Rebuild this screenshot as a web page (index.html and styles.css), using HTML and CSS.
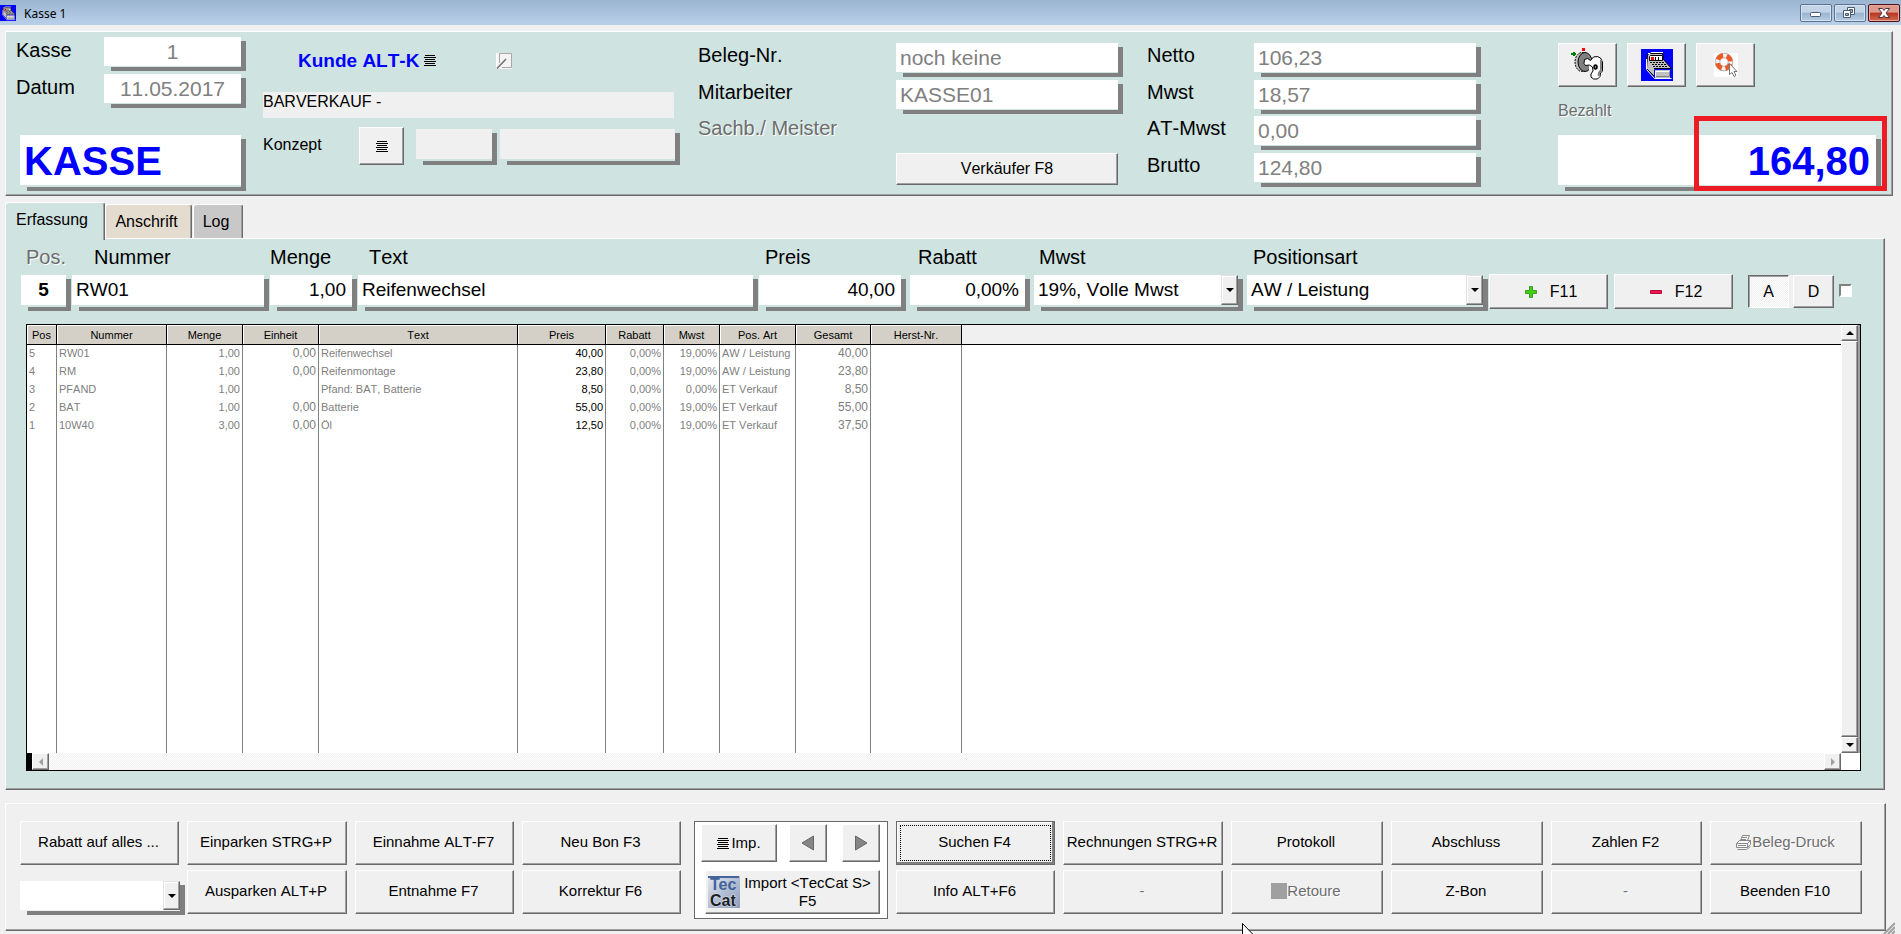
FILE: index.html
```html
<!DOCTYPE html>
<html lang="de">
<head>
<meta charset="utf-8">
<meta name="viewport" content="width=device-width, initial-scale=1">
<title>Kasse 1</title>
<link rel="stylesheet" href="styles.css">
</head>
<body>
<svg class="defs" width="0" height="0" aria-hidden="true">
  <symbol id="lines" viewBox="0 0 12 11">
    <path d="M1 .5h10M0 2.5h12M1 4.5h10M0 6.5h12M1 8.5h10M0 10.5h12" stroke="#000" fill="none" shape-rendering="crispEdges"/>
  </symbol>
  <symbol id="register" viewBox="0 0 32 32">
    <path fill="#00f" d="M0 0h32v32H0z"/>
    <path fill="#c0c0c0" stroke="#000" d="M6.500 5.500l2-1h13l1 6 7 8v10h-15l-9-9z"/>
    <path fill="none" stroke="#fff" d="M7 4.500h2l1-1h12M5.500 20v-10"/>
    <path fill="#fff" stroke="#000" d="M8.500 7.500l1-1h12v5h-13z"/>
    <path fill="red" d="M10 8h3v3h-3z"/>
    <path fill="none" stroke="#000" d="M14.500 8v3M17.500 8v3"/>
    <path fill="none" stroke="#000" stroke-dasharray="2 1" d="M9 13.500h15M11 15.500h15M12 17.500h15"/>
    <path fill="none" stroke="#000" d="M13 19.500h17"/>
    <path fill="#c0c0c0" stroke="#00f" d="M13.500 20.500h16v9h-16z"/>
    <path fill="none" stroke="#fff" d="M14.500 28v-5.500h14M5.500 20.500l8 9h17"/>
    <path fill="none" stroke="#808080" d="M15 27.500h13.500v-5"/>
  </symbol>
</svg>

<header class="titlebar">
  <svg class="app-icon" width="16" height="16"><use href="#register"/></svg>
  <h1 class="title">Kasse 1</h1>
  <div class="window-buttons">
    <button class="win" type="button" aria-label="Minimieren">
      <svg width="30" height="16"><rect x="9.500" y="7.500" width="10" height="4" rx="1" fill="#fff" stroke="#4a5a6e"/></svg>
    </button>
    <button class="win" type="button" aria-label="Wiederherstellen">
      <svg width="30" height="16"><path fill="#fff" stroke="#4a5a6e" d="M12.500 2.500h7v7h-7z"/><path fill="#9bb5d0" stroke="#4a5a6e" d="M14.500 4.500h3v3h-3z"/><path fill="#fff" stroke="#4a5a6e" d="M8.500 5.500h7v7h-7z"/><path fill="#9bb5d0" stroke="#4a5a6e" d="M10.500 8.500h3v2h-3z"/></svg>
    </button>
    <button class="win close" type="button" aria-label="Schließen">
      <svg width="30" height="16"><path fill="#fff" stroke="#4b3440" d="M9.500 3.500h4l1.500 2 1.500-2h4l-3.500 4.500 3.500 4.500h-4l-1.500-2-1.500 2h-4l3.500-4.500z"/></svg>
    </button>
  </div>
</header>

<main class="window">
  <section class="panel head">
    <div class="block register">
      <div class="pairs">
        <label for="kasse">Kasse</label>
        <div class="field"><input class="center" id="kasse" value="1" readonly></div>
        <label for="datum">Datum</label>
        <div class="field"><input class="center" id="datum" value="11.05.2017" readonly></div>
      </div>
      <div class="field display left"><input value="KASSE" aria-label="Modus" readonly></div>
    </div>

    <div class="block customer">
      <div class="customer-line">
        <button class="plain" type="button">Kunde ALT-K <svg width="12" height="11"><use href="#lines"/></svg></button>
        <button class="plain" type="button" aria-label="Notiz">
          <svg width="16" height="16"><path fill="#f4f4f4" d="M0 0h16v16H0z"/><path fill="none" stroke="#a8a8a8" d="M3.500 10V.5h12v14H6"/><path fill="none" stroke="#fff" d="M.5 0v14"/><path stroke="#707070" stroke-width="1.500" d="M1 15.500L10 6"/></svg>
        </button>
      </div>
      <output class="customer-name">BARVERKAUF -</output>
      <div class="concept">
        <label for="konzept">Konzept</label>
        <button class="btn concept-btn" type="button" aria-label="Konzept wählen"><svg width="12" height="11"><use href="#lines"/></svg></button>
        <div class="field gap2 muted short"><input id="konzept" readonly></div>
        <div class="field gap2 muted long"><input aria-label="Konzepttext" readonly></div>
      </div>
    </div>

    <div class="block pairs receipt">
      <label for="beleg">Beleg-Nr.</label>
      <div class="field"><input id="beleg" value="noch keine" readonly></div>
      <label for="mitarbeiter">Mitarbeiter</label>
      <div class="field"><input id="mitarbeiter" value="KASSE01" readonly></div>
      <span class="disabled-text">Sachb./ Meister</span>
      <button class="btn seller" type="button">Verkäufer F8</button>
    </div>

    <div class="block pairs totals">
      <label for="netto">Netto</label>
      <div class="field"><input id="netto" value="106,23" readonly></div>
      <label for="mwst">Mwst</label>
      <div class="field"><input id="mwst" value="18,57" readonly></div>
      <label for="atmwst">AT-Mwst</label>
      <div class="field"><input id="atmwst" value="0,00" readonly></div>
      <label for="brutto">Brutto</label>
      <div class="field"><input id="brutto" value="124,80" readonly></div>
    </div>

    <div class="block payment">
      <div class="tools">
        <button class="btn" type="button" aria-label="Schlüssel">
          <svg width="34" height="34" viewBox="0 0 34 34">
            <path fill="green" d="M2 4h2v1h1v2H4v1H2V7H0V5h2z"/><path fill="red" d="M11 0h3v3h-3z"/>
            <ellipse cx="11" cy="14" rx="7" ry="9.500" fill="#c0c0c0" stroke="#000" stroke-dasharray="2 1"/>
            <ellipse cx="14" cy="14" rx="7" ry="9.500" fill="#808080" stroke="#000"/>
            <path fill="#fff" d="M18 12h6v10h-6z"/>
            <path fill="#fff" stroke="#000" d="M13.500 11.500l3-1 3 2 3-3.500 4-.5 3 1.500 2 4v9l-2 2-.5 3.500-2.500 2.500h-4l-2.500-2v-3l2-3-.5-4-3-2-4 .5-1.500-2z"/>
            <path stroke="#808080" stroke-width="2" fill="none" d="M30 12v10l-2 3-.5 3"/>
            <ellipse cx="24.500" cy="19" rx="1.500" ry="2" fill="#808080" stroke="#000" stroke-width="1.500"/>
          </svg>
        </button>
        <button class="btn" type="button" aria-label="Kassenlade"><svg width="32" height="32"><use href="#register"/></svg></button>
        <button class="btn" type="button" aria-label="Hilfe">
          <svg width="24" height="24" viewBox="0 0 24 24">
            <path fill="#fff" d="M0 0h24v24H0z"/>
            <circle cx="10" cy="9" r="6.500" fill="none" stroke="#a8a0a0" stroke-width="5.500"/>
            <circle cx="10" cy="9" r="6.500" fill="none" stroke="#f4f4f4" stroke-width="4"/>
            <circle cx="10" cy="9" r="6.500" fill="none" stroke="#ee5a24" stroke-width="4.500" stroke-dasharray="6.500 3.710" stroke-dashoffset="-2"/>
            <path fill="#fff" stroke="#777" d="M15.500 10.500v11l2.500-2 2 4 2-1-2-4h3z"/>
          </svg>
        </button>
      </div>
      <label class="disabled-text small" for="bezahlt">Bezahlt</label>
      <div class="field display right"><input id="bezahlt" value="164,80" readonly><i class="marker"></i></div>
    </div>
  </section>

  <nav class="tabs">
    <button class="tab active" type="button">Erfassung</button>
    <button class="tab sand" type="button">Anschrift</button>
    <button class="tab grey" type="button">Log</button>
  </nav>

  <section class="panel entry">
    <form class="entry-row">
      <div class="cell"><label class="disabled-text" for="f-pos">Pos.</label><div class="field gap2"><input class="center bold" id="f-pos" value="5"></div></div>
      <div class="cell in1"><label for="f-nr">Nummer</label><div class="field gap2"><input id="f-nr" value="RW01"></div></div>
      <div class="cell in0"><label for="f-menge">Menge</label><div class="field gap2"><input class="num" id="f-menge" value="1,00"></div></div>
      <div class="cell in2"><label for="f-text">Text</label><div class="field gap2"><input id="f-text" value="Reifenwechsel"></div></div>
      <div class="cell in3 roomy"><label for="f-preis">Preis</label><div class="field gap2"><input class="num" id="f-preis" value="40,00"></div></div>
      <div class="cell in4 roomy"><label for="f-rabatt">Rabatt</label><div class="field gap2"><input class="num" id="f-rabatt" value="0,00%"></div></div>
      <div class="cell roomy"><label for="f-mwst">Mwst</label><div class="field gap2"><select id="f-mwst"><option>19%, Volle Mwst</option></select><span class="arrow"></span></div></div>
      <div class="cell in3"><label for="f-art">Positionsart</label><div class="field gap2"><select id="f-art"><option>AW / Leistung</option></select><span class="arrow"></span></div></div>
      <button class="btn key" type="button"><svg width="14" height="14"><path fill="#3fd40a" stroke="#3f9a2a" d="M5.500 1.500h3v4h4v3h-4v4h-3v-4h-4v-3h4z"/></svg>F11</button>
      <button class="btn key wide" type="button"><svg width="14" height="14"><path fill="#f5134f" stroke="#b01040" d="M1.500 5.500h11v3h-11z"/></svg>F12</button>
      <div class="toggle">
        <button class="btn pressed" type="button">A</button>
        <button class="btn" type="button">D</button>
      </div>
      <input class="check" type="checkbox" aria-label="Option">
    </form>

    <div class="grid-view">
      <table class="items">
        <colgroup>
          <col class="c-pos"><col class="c-nr"><col class="c-qty"><col class="c-qty"><col class="c-text"><col class="c-price"><col class="c-disc"><col class="c-vat"><col class="c-qty"><col class="c-sum"><col class="c-mfr"><col>
        </colgroup>
        <thead>
          <tr><th>Pos</th><th>Nummer</th><th>Menge</th><th>Einheit</th><th>Text</th><th>Preis</th><th>Rabatt</th><th>Mwst</th><th>Pos. Art</th><th>Gesamt</th><th>Herst-Nr.</th><td></td></tr>
        </thead>
        <tbody>
          <tr><td>5</td><td>RW01</td><td class="n">1,00</td><td class="n big">0,00</td><td>Reifenwechsel</td><td class="n dark">40,00</td><td class="n">0,00%</td><td class="n">19,00%</td><td>AW / Leistung</td><td class="n big">40,00</td><td></td><td></td></tr>
          <tr><td>4</td><td>RM</td><td class="n">1,00</td><td class="n big">0,00</td><td>Reifenmontage</td><td class="n dark">23,80</td><td class="n">0,00%</td><td class="n">19,00%</td><td>AW / Leistung</td><td class="n big">23,80</td><td></td><td></td></tr>
          <tr><td>3</td><td>PFAND</td><td class="n">1,00</td><td></td><td>Pfand: BAT, Batterie</td><td class="n dark">8,50</td><td class="n">0,00%</td><td class="n">0,00%</td><td>ET Verkauf</td><td class="n big">8,50</td><td></td><td></td></tr>
          <tr><td>2</td><td>BAT</td><td class="n">1,00</td><td class="n big">0,00</td><td>Batterie</td><td class="n dark">55,00</td><td class="n">0,00%</td><td class="n">19,00%</td><td>ET Verkauf</td><td class="n big">55,00</td><td></td><td></td></tr>
          <tr><td>1</td><td>10W40</td><td class="n">3,00</td><td class="n big">0,00</td><td>Öl</td><td class="n dark">12,50</td><td class="n">0,00%</td><td class="n">19,00%</td><td>ET Verkauf</td><td class="n big">37,50</td><td></td><td></td></tr>
          <tr class="rest"><td></td><td></td><td></td><td></td><td></td><td></td><td></td><td></td><td></td><td></td><td></td><td></td></tr>
        </tbody>
      </table>
      <div class="vscroll">
        <button class="btn scroll up" type="button" aria-label="Nach oben"></button>
        <div class="btn thumb"></div>
        <button class="btn scroll down" type="button" aria-label="Nach unten"></button>
      </div>
      <div class="hscroll">
        <button class="btn scroll prev" type="button" aria-label="Nach links" disabled></button>
        <button class="btn scroll next" type="button" aria-label="Nach rechts" disabled></button>
      </div>
    </div>
  </section>

  <section class="panel actions">
    <button class="btn" type="button">Rabatt auf alles ...</button>
    <button class="btn" type="button">Einparken STRG+P</button>
    <button class="btn" type="button">Einnahme ALT-F7</button>
    <button class="btn" type="button">Neu Bon F3</button>
    <div class="import">
      <div class="import-top">
        <button class="btn imp" type="button"><svg width="12" height="11"><use href="#lines"/></svg>Imp.</button>
        <button class="btn step" type="button" aria-label="Zurück"><svg width="14" height="16"><path fill="#858585" stroke="#666" d="M12.500 1v14L1 8z"/></svg></button>
        <button class="btn step" type="button" aria-label="Weiter"><svg width="14" height="16"><path fill="#858585" stroke="#666" d="M1.500 1v14L13 8z"/></svg></button>
      </div>
      <button class="btn teccat" type="button">
        <svg width="32" height="32" viewBox="0 0 32 32" aria-hidden="true">
          <defs><linearGradient id="steel" x1="0" x2="1" y1="0" y2="1"><stop offset="0" stop-color="#e4e9f1"/><stop offset=".5" stop-color="#b4bfd4"/><stop offset="1" stop-color="#8f9dbb"/></linearGradient></defs>
          <path fill="url(#steel)" d="M0 0h32v32H0z"/>
          <path fill="#43639a" d="M0 0h31v2H0z"/>
          <text x="2" y="14" class="logo-tec">Tec</text>
          <text x="2" y="30" class="logo-cat">Cat</text>
        </svg>
        <span>Import &lt;TecCat S&gt; F5</span>
      </button>
    </div>
    <button class="btn focused" type="button">Suchen F4</button>
    <button class="btn" type="button">Rechnungen STRG+R</button>
    <button class="btn" type="button">Protokoll</button>
    <button class="btn" type="button">Abschluss</button>
    <button class="btn" type="button">Zahlen F2</button>
    <button class="btn" type="button" disabled>
      <svg width="17" height="15"><path fill="#f8f8f8" stroke="#8a8a8a" d="M5.500 5.500l2-5h7l-2 5zM1.500 8.500l3-3h11l-3 3zM1.500 8.500h11v4h-11zM12.500 12.500l3-3v-4M2.500 14.500h9l4-3M7 2.500h5M6 4.500h5M3 10.500h8"/></svg>Beleg-Druck</button>

    <div class="field combo"><select aria-label="Rabatt"><option></option></select><span class="arrow"></span></div>
    <button class="btn" type="button">Ausparken ALT+P</button>
    <button class="btn" type="button">Entnahme F7</button>
    <button class="btn" type="button">Korrektur F6</button>
    <button class="btn" type="button">Info ALT+F6</button>
    <button class="btn" type="button" disabled>-</button>
    <button class="btn" type="button" disabled><svg width="16" height="16"><path fill="#a0a0a0" d="M0 0h16v16H0z"/></svg>Retoure</button>
    <button class="btn" type="button">Z-Bon</button>
    <button class="btn" type="button" disabled>-</button>
    <button class="btn" type="button">Beenden F10</button>
  </section>
</main>
<svg class="pointer" width="12" height="19" aria-hidden="true"><path fill="#fff" stroke="#000" d="M.5.500v16l4-4 3 6 2-1-3-5.500h5z"/></svg>
<svg class="grip" width="12" height="12" aria-hidden="true"><path stroke="#a0a0a0" stroke-width="2" d="M1 12L12 1M5 12l7-7M9 12l3-3"/></svg>
</body>
</html>
```
FILE: styles.css
```css
:root {
  --face: #f0f0f0;
  --mint: #cfe3e1;
  --shade: #a0a0a0;
  --dark: #696969;
  --drop: #808080;
}

* { box-sizing: border-box; }

body {
  margin: 0;
  min-height: 100vh;
  display: flex;
  flex-direction: column;
  position: relative;
  overflow-x: hidden;
  background: var(--face);
  color: #000;
  font: 16px/20px "Liberation Sans", Arial, sans-serif;
  font-kerning: none;
}

button, input, select { font: inherit; font-kerning: none; color: inherit; border-radius: 0; }
button { padding: 0; }
svg { display: block; flex: none; }
.defs { position: absolute; }

/* Title bar */
.titlebar {
  display: flex;
  align-items: center;
  height: 25px;
  background: linear-gradient(#9bb5d0, #bad0ea);
}
.app-icon { margin-top: 1px; }
.title {
  flex: 1;
  margin: 2px 0 0 8px;
  font: 12px/16px "Noto Sans", sans-serif;
}
.window-buttons { display: flex; gap: 2px; padding-right: 1px; }
.win {
  width: 32px;
  height: 18px;
  border: 1px solid #5b7390;
  border-radius: 2px;
  background: linear-gradient(#c3d4e8 45%, #9ab3d0 50%, #b6cce4);
  box-shadow: inset 0 0 0 1px #d5e3f2;
}
.win.close {
  border-color: #4a1018;
  background: linear-gradient(#dd9a8c 45%, #b9351f 50%, #cf6a50);
  box-shadow: inset 0 0 0 1px #e8a99c;
}

.window {
  flex: 1;
  display: flex;
  flex-direction: column;
  padding: 6px 8px 3px 5px;
}

.panel {
  border: 1px solid;
  border-color: #fff var(--dark) var(--dark) #fff;
  box-shadow: inset -1px -1px 0 var(--shade);
  background: var(--mint);
}

/* Raised button */
.btn {
  display: flex;
  align-items: center;
  justify-content: center;
  border: 1px solid;
  border-color: #fff var(--dark) var(--dark) #fff;
  background: var(--face);
  box-shadow: inset -1px -1px 0 var(--shade);
}
.btn:disabled, .disabled-text { color: #6d6d6d; text-shadow: 1px 1px 0 #fff; }

/* Text box with an L-shaped drop shadow */
.field {
  display: flex;
  height: 34px;
  padding: 0 5px 5px 0;
  background:
    linear-gradient(var(--drop), var(--drop)) right bottom / calc(100% - 7px) 4px no-repeat,
    linear-gradient(var(--drop), var(--drop)) right bottom / 5px calc(100% - 4px) no-repeat;
}
.field.gap2 { height: 36px; padding-bottom: 6px; }
.field input, .field select {
  flex: 1;
  min-width: 0;
  width: 100%;
  height: 100%;
  border: 0;
  padding: 0 4px;
  background: #fff;
  outline: 0;
  appearance: none;
}
.field.muted input { background: var(--face); }
.field .center { text-align: center; }
.field .num { text-align: right; padding-right: 6px; }
.field .bold { font-weight: bold; }
.arrow {
  flex: none;
  width: 17px;
  border: 1px solid;
  border-color: #e3e3e3 var(--dark) var(--dark) #e3e3e3;
  background: var(--face);
  box-shadow: inset -1px -1px 0 var(--shade), inset 1px 1px 0 #fff;
  display: grid;
  place-items: center;
}
.arrow::before {
  content: "";
  border: 4px solid transparent;
  border-top-color: #000;
  border-bottom: 0;
}

/* Header panel */
.head {
  display: grid;
  grid-template-columns: 246fr 435fr 449fr 411fr 323fr;
  height: 165px;
  padding: 1px 11px;
}
.block { padding-top: 10px; }
.pairs {
  display: grid;
  gap: 3px 0;
  align-content: start;
  font-size: 20px;
  line-height: 24px;
}
.pairs input { font-size: 21px; color: var(--drop); }
.register { padding: 4px 17px 0 0; }
.register .pairs {
  grid-template-columns: 88px minmax(0, 1fr);
  margin-left: -1px;
  line-height: 26px;
}
.receipt, .totals { grid-template-rows: 34px 33px 34px 34px; }
.receipt { grid-template-columns: 198px minmax(0, 1fr); padding-right: 24px; }
.totals { grid-template-columns: 107px minmax(0, 1fr); padding-right: 77px; }
.seller { grid-column: 2; grid-row: 4; height: 32px; margin-right: 5px; font-size: 16px; }

.field.display { height: 56px; padding-bottom: 6px; }
.field.display input {
  color: #00f;
  font-size: 40px;
  font-weight: bold;
  padding-top: 2px;
}
.display.left { margin: 27px 0 0 3px; }

.customer { padding: 14px 18px 0 0; }
.customer-line { display: flex; align-items: center; gap: 60px; height: 27px; padding-left: 35px; }
.plain {
  display: flex;
  align-items: center;
  gap: 5px;
  border: 0;
  background: none;
  color: #00f;
  font-size: 19px;
  font-weight: bold;
}
.customer-name {
  display: block;
  height: 26px;
  margin: 18px 6px 9px 0;
  background: var(--face);
}
.concept { display: flex; height: 38px; }
.concept label { width: 96px; padding-top: 8px; }
.concept-btn { width: 45px; margin-right: 12px; }
.concept .field { margin-top: 2px; }
.concept .short { width: 81px; margin-right: 3px; }
.concept .long { flex: 1; }

.payment { display: flex; flex-direction: column; }
.tools { display: flex; gap: 10px; }
.tools .btn { width: 59px; height: 44px; }
.small { margin: 14px 0; }
.display.right { position: relative; }
.display.right input { text-align: right; padding-right: 6px; }
.marker {
  position: absolute;
  right: -6px;
  bottom: 0;
  width: 193px;
  height: 75px;
  border: 5px solid #ed1c24;
}

/* Tabs */
.tabs { display: flex; align-items: flex-end; height: 42px; }
.tab {
  height: 34px;
  border: 1px solid;
  border-color: #fff var(--dark) transparent #fff;
  border-bottom: 0;
  border-radius: 3px 3px 0 0;
  background: #c8c8c8;
  box-shadow: inset -1px 0 0 var(--shade);
}
.tab.active { width: 100px; height: 38px; margin-bottom: -2px; padding: 0 6px 4px 0; background: var(--mint); position: relative; }
.tab.sand { width: 87px; padding-right: 4px; background: #e4dccf; }
.tab.grey { width: 50px; margin-left: 1px; padding-right: 4px; }

/* Entry panel */
.entry {
  flex: 1;
  display: flex;
  flex-direction: column;
  margin-right: 8px;
  padding: 1px;
}
.entry-row {
  display: grid;
  grid-template-columns: 51fr 198fr 88fr 401fr 151fr 124fr 213fr 242fr 125fr 134fr 91fr 13px;
  align-items: end;
  padding: 5px 31px 0 14px;
  font-size: 19px;
}
.cell { min-width: 0; padding-right: 1px; }
.cell.roomy { padding-right: 4px; }
.cell label { display: block; padding-left: 5px; font-size: 20px; line-height: 24px; margin-bottom: 6px; white-space: nowrap; }
.cell.in0 label { padding-left: 0; }
.cell.in1 label { padding-left: 22px; }
.cell.in2 label { padding-left: 11px; }
.cell.in3 label { padding-left: 6px; }
.cell.in4 label { padding-left: 8px; }
.key { height: 35px; margin: 0 6px 2px 0; padding-left: 4px; gap: 12px; font-size: 16px; }
.key.wide { margin-right: 15px; }
.toggle { display: flex; gap: 4px; margin-bottom: 3px; background: var(--face); width: 86px; }
.toggle .btn { flex: 1; height: 33px; font-size: 16px; }
.toggle .pressed {
  border-color: var(--dark) #fff #fff var(--dark);
  box-shadow: inset 1px 1px 0 var(--shade);
  background: repeating-conic-gradient(#fff 0 25%, var(--face) 0 50%) 0 0 / 2px 2px;
}
.check {
  appearance: none;
  width: 13px;
  height: 13px;
  margin: 0 0 14px;
  border: 2px solid;
  border-color: var(--drop) #fff #fff var(--drop);
  background: #fff;
}

.grid-view {
  flex: 1;
  display: grid;
  grid-template-columns: minmax(0, 1fr) 19px;
  grid-template-rows: 1fr 17px;
  margin: 13px 22px 17px 19px;
  border: 1px solid #000;
  background: #fff;
}
.items {
  width: 100%;
  height: 100%;
  table-layout: fixed;
  border-collapse: separate;
  border-spacing: 0;
  font-size: 11px;
  line-height: 14px;
  color: var(--drop);
}
.items td, .items th { padding: 0 2px; border-right: 1px solid var(--drop); white-space: nowrap; overflow: hidden; }
.items th, .items thead td { height: 20px; border-right-color: #000; border-bottom: 1px solid #000; font-weight: normal; }
.items th { color: #000; background: #d4d0c8; box-shadow: inset 1px 1px 0 #fff; }
.items td:last-child { border-right: 0; }
.items thead td { background: var(--face); }
.items tbody td { height: 18px; padding-bottom: 2px; }
.items .rest td { height: auto; }
.items .n { text-align: right; }
.items .big { font-size: 12px; }
.items .dark { color: #000; }
.c-pos { width: 30px; }
.c-nr { width: 110px; }
.c-qty { width: 76px; }
.c-text { width: 199px; }
.c-price { width: 88px; }
.c-disc { width: 58px; }
.c-vat { width: 56px; }
.c-sum { width: 75px; }
.c-mfr { width: 91px; }

.vscroll { display: flex; flex-direction: column; border-right: 2px solid var(--shade); }
.thumb { flex: 1; }
.scroll { width: 17px; height: 16px; }
.scroll::before { content: ""; border: 4px solid transparent; }
.scroll.up::before { border-top: 0; border-bottom-color: #000; }
.scroll.down::before { border-bottom: 0; border-top-color: #000; }
.scroll.prev::before { border-left: 0; border-right-color: var(--shade); }
.scroll.next::before { border-right: 0; border-left-color: var(--shade); }
.hscroll {
  display: flex;
  justify-content: space-between;
  border-left: 5px solid #000;
  background: repeating-conic-gradient(#fff 0 25%, var(--face) 0 50%) 0 0 / 2px 2px;
}
.hscroll .scroll { height: 17px; }

/* Action panel */
.actions {
  display: grid;
  grid-template-columns: 159fr 160fr 159fr 159fr 199fr 159fr 160fr 152fr 152fr 151fr 152fr;
  grid-template-rows: 44px 44px;
  gap: 5px 8px;
  height: 128px;
  margin: 13px 7px 0 0;
  padding: 17px 23px 0 14px;
  background: var(--face);
  font-size: 15px;
  line-height: 18px;
}
.actions > .btn { white-space: nowrap; min-width: 0; padding: 0 2px 2px 0; }
.focused {
  border-color: var(--dark);
  box-shadow: inset -2px -2px 0 var(--drop), inset 1px 1px 0 #fff;
  outline: 1px dotted #000;
  outline-offset: -5px;
}
.combo { margin: 11px -6px 0 0; }
.import {
  grid-column: 5;
  grid-row: 1 / 3;
  height: 98px;
  margin-left: 5px;
  padding: 2px 7px 0 6px;
  border: 1px solid var(--dark);
  background: #fff;
}
.import-top { display: flex; justify-content: space-between; height: 38px; }
.imp { width: 76px; gap: 2px; }
.step { width: 38px; }
.import-top .step:nth-child(2) { margin-left: -4px; }
.teccat { width: calc(100% - 4px); height: 44px; margin: 8px 0 0 4px; padding-right: 4px; gap: 2px; }
.teccat svg { overflow: visible; }
.teccat span { width: 132px; }
.logo-tec { font: bold 16px "Liberation Sans", sans-serif; fill: #43639a; }
.logo-cat { font: bold 16px "Liberation Sans", sans-serif; fill: #1d1d28; stroke: #dfe5ef; stroke-width: 1px; paint-order: stroke; }

.pointer { position: absolute; left: 1242px; top: 923px; height: 11px; overflow: hidden; }
.grip { position: absolute; right: 6px; bottom: 0; }
```
